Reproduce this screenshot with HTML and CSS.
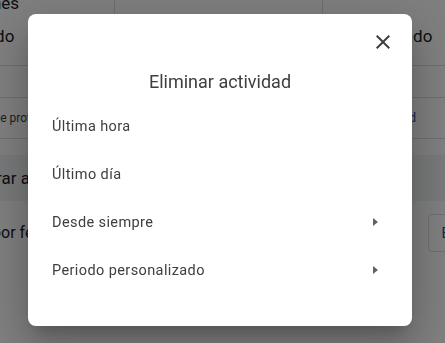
FILE: index.html
```html
<!DOCTYPE html>
<html lang="es">
<head>
<meta charset="utf-8">
<title>Eliminar actividad</title>
<link rel="stylesheet" href="styles.css">
</head>
<body>
<div class="page">
  <div class="stats">
    <div class="cell cell-left"><span class="stat">Opciones<br>Activado</span></div>
    <div class="cell cell-mid"></div>
    <div class="cell cell-right"><span class="stat">Activado</span></div>
  </div>
  <div class="row-empty"></div>
  <div class="row-info">
    <span class="clip"><span class="info">se protege tu privacidad</span></span>
    <span class="link-clip"><span class="link">Google Cloud</span></span>
  </div>
  <div class="band"><span class="clip"><span class="band-text">Borrar actividad</span></span></div>
  <div class="filter">
    <span class="clip filter-clip"><span class="filter-text">Filtrar por fecha</span></span>
    <span class="btn">Eliminar</span>
  </div>
</div>

<div class="scrim">
  <div class="dialog" role="dialog">
    <div class="dialog-head">
      <button class="close" aria-label="Cerrar">
        <svg width="24" height="24" viewBox="0 0 24 24"><path d="M19 6.41 17.59 5 12 10.59 6.41 5 5 6.41 10.59 12 5 17.59 6.41 19 12 13.41 17.59 19 19 17.59 13.41 12z" fill="#3c4043"/></svg>
      </button>
    </div>
    <h2 class="title">Eliminar actividad</h2>
    <ul class="menu">
      <li class="item">Última hora</li>
      <li class="item">Último día</li>
      <li class="item">Desde siempre<span class="caret"></span></li>
      <li class="item">Periodo personalizado<span class="caret"></span></li>
    </ul>
  </div>
</div>
</body>
</html>
```

FILE: styles.css
```css
* { box-sizing: border-box; }
html, body { margin: 0; padding: 0; }
body {
  width: 445px;
  height: 343px;
  overflow: hidden;
  background: #ffffff;
  font-family: Roboto, "Noto Sans", Arial, sans-serif;
  color: #202124;
}

/* underlying page */
.page { width: 445px; }
.stats {
  display: grid;
  grid-template-columns: 115px 208px 1fr;
  height: 66px;
  border-bottom: 1px solid #dadce0;
}
.cell { overflow: hidden; position: relative; }
.cell-left, .cell-mid { border-right: 1px solid #dadce0; }
.stat {
  display: block;
  font-size: 17px;
  line-height: 33px;
  white-space: nowrap;
}
.cell-left .stat { margin-top: -13px; margin-left: -52px; }
.cell-right .stat { margin-top: 20px; margin-left: 43px; }
.row-empty { height: 32px; border-bottom: 1px solid #dadce0; }
.row-info {
  height: 41px;
  border-bottom: 1px solid #dadce0;
  display: flex;
  justify-content: space-between;
  align-items: center;
  white-space: nowrap;
  overflow: hidden;
}
.clip {
  display: block;
  width: 28px;
  overflow: hidden;
  white-space: nowrap;
  flex: none;
}
.info { display: block; margin-left: -6px; color: #3c4043; font-size: 12px; }
.link-clip {
  display: block;
  width: 8px;
  overflow: hidden;
  white-space: nowrap;
  direction: rtl;
  margin-right: 29px;
  margin-top: -4px;
}
.link { color: #1a4fa6; font-size: 13px; direction: ltr; unicode-bidi: embed; }
.band {
  margin-top: 16px;
  height: 46px;
  background: #f1f3f4;
  display: flex;
  align-items: center;
  overflow: hidden;
  white-space: nowrap;
}
.band-text { display: block; font-size: 17px; margin-left: -30px; }
.filter {
  height: 75px;
  display: flex;
  align-items: center;
  justify-content: space-between;
  white-space: nowrap;
  overflow: hidden;
}
.filter-clip { margin-top: -12px; }
.filter-text { display: block; font-size: 16px; margin-left: -53px; }
.btn {
  border: 1px solid #dadce0;
  border-radius: 4px;
  height: 38px;
  padding: 0 12px;
  display: flex;
  align-items: center;
  color: #1a4fa6;
  font-size: 14px;
  margin-right: -60px;
  margin-top: -12px;
}

/* scrim and dialog */
.scrim {
  position: fixed;
  inset: 0;
  background: rgba(0, 0, 0, 0.5);
  padding: 14px 0 0 28px;
}
.dialog {
  width: 384px;
  height: 312px;
  background: #ffffff;
  border-radius: 8px;
  box-shadow: 0 24px 38px 3px rgba(0,0,0,.14), 0 9px 46px 8px rgba(0,0,0,.12), 0 11px 15px -7px rgba(0,0,0,.2);
  padding: 16px 0 32px;
}
.dialog-head {
  display: flex;
  justify-content: flex-end;
  padding-right: 17px;
  height: 24px;
}
.close {
  width: 24px;
  height: 24px;
  padding: 0;
  border: 0;
  background: none;
  display: flex;
}
.title {
  margin: 16px 0 8px;
  text-align: center;
  font-size: 18px;
  line-height: 24px;
  font-weight: 400;
  color: #3c4043;
}
.menu { list-style: none; margin: 0; padding: 0; }
.item {
  height: 48px;
  display: flex;
  align-items: center;
  justify-content: space-between;
  padding: 0 34px 0 24px;
  font-size: 14.5px;
  letter-spacing: 0.4px;
  color: #3c4043;
}
.caret {
  width: 0;
  height: 0;
  border-top: 4px solid transparent;
  border-bottom: 4px solid transparent;
  border-left: 5px solid #5f6368;
}
```
